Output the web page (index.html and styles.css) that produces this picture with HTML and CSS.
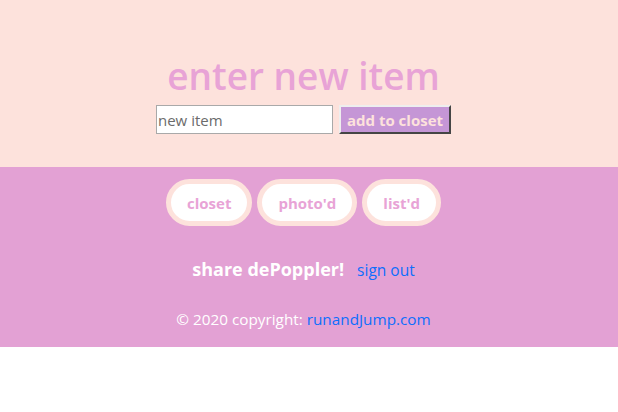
FILE: index.html
```html
<!DOCTYPE html>
<html>
<head>
<meta charset="utf-8">
<link rel="stylesheet" href="styles.css">
</head>
<body>
<header class="top">
  <h1 class="title">enter new item</h1>
  <form class="add-form">
    <input class="item-input" type="text" value="new item">
    <button class="add-btn" type="button">add to closet</button>
  </form>
</header>
<section class="bottom">
  <nav class="pills">
    <a class="pill">closet</a>
    <a class="pill">photo'd</a>
    <a class="pill">list'd</a>
  </nav>
  <div class="share">
    <span class="share-text">share dePoppler!</span>
    <a class="link">sign out</a>
  </div>
  <footer class="foot">© 2020 copyright: <a class="link">runandJump.com</a></footer>
</section>
</body>
</html>
```
FILE: styles.css
```css
html, body { margin: 0; padding: 0; background: #fff; }
body { font-family: "Open Sans", "Noto Sans", sans-serif; }
.top {
  background: #fde2dc;
  height: 167px;
  box-sizing: border-box;
  padding: 52px 11px 0 0;
  display: flex;
  flex-direction: column;
  align-items: center;
}
.title {
  margin: 0;
  font-size: 37px;
  font-weight: 600;
  color: #e8a3d6;
  line-height: 48px;
}
.add-form {
  margin-top: 5px;
  display: flex;
  gap: 6px;
  align-items: stretch;
}
.item-input {
  width: 177px;
  height: 29px;
  box-sizing: border-box;
  border: 1px solid #a9a9a9;
  font-family: inherit;
  font-size: 15px;
  color: #6b6b6b;
  padding: 0 1px;
  background: #fff;
}
.add-btn {
  width: 112px;
  height: 29px;
  box-sizing: border-box;
  background: #c596d6;
  border: 2px outset #eee;
  border-right-color: #999;
  border-bottom-color: #999;
  color: #fde2dc;
  font-family: inherit;
  font-weight: 700;
  font-size: 15px;
  padding: 0;
}
.bottom {
  background: #e3a1d4;
  height: 180px;
  box-sizing: border-box;
  padding: 12px 11px 0 0;
  display: flex;
  flex-direction: column;
  align-items: center;
}
.pills { display: flex; gap: 5px; }
.pill {
  height: 47px;
  box-sizing: border-box;
  border: 5px solid #fde2dc;
  border-radius: 24px;
  background: #fff;
  color: #e8a3d6;
  font-weight: 700;
  font-size: 15px;
  display: flex;
  align-items: center;
  padding: 0 16px;
}
.share {
  margin-top: 31px;
  display: flex;
  align-items: baseline;
  gap: 13px;
}
.share-text { color: #fff; font-weight: 700; font-size: 18px; }
.link { color: #0d6efd; }
.share .link { font-size: 15.5px; }
.foot {
  margin-top: 28px;
  color: #fff;
  font-size: 15.3px;
}
```
